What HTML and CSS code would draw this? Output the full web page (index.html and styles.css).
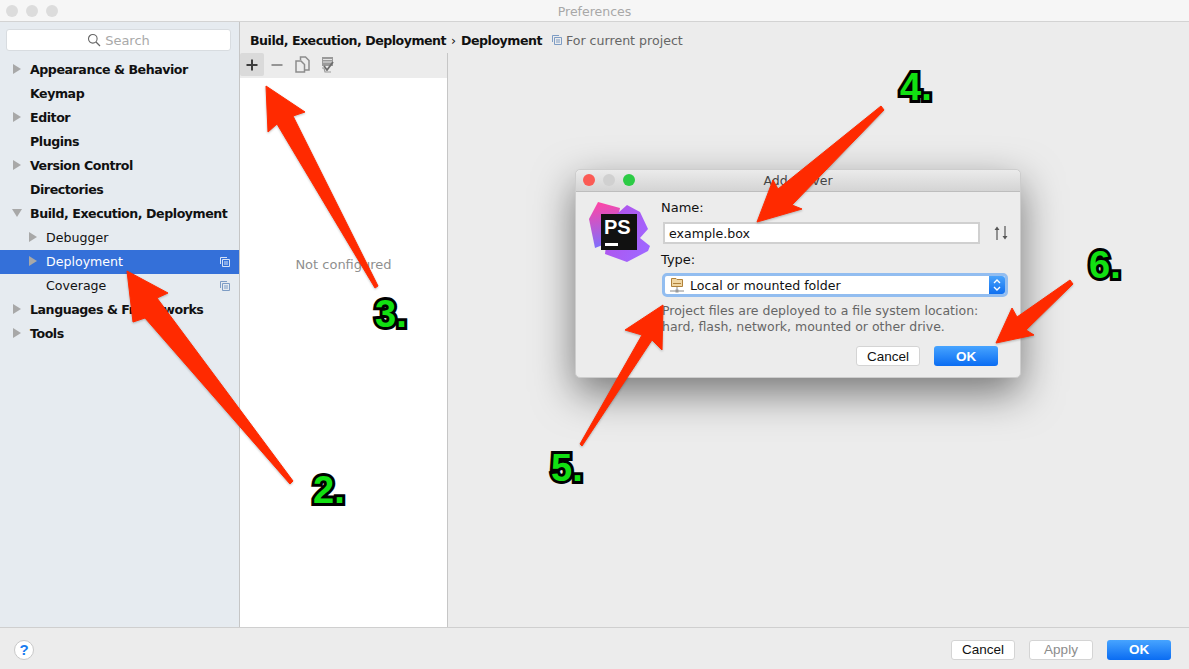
FILE: index.html
```html
<!DOCTYPE html>
<html>

<head>
    <meta charset="utf-8">
    <title>Preferences</title>
    <link rel="stylesheet" href="styles.css">
</head>

<body>
    <div id="window">
        <div class="titlebar">
            <div class="lights">
                <span class="light"></span>
                <span class="light"></span>
                <span class="light"></span>
            </div>
            <span class="title">Preferences</span>
        </div>

        <div class="content">
            <div class="sidebar">
                <div class="search">
                    <svg width="14" height="14" viewBox="0 0 14 14">
                        <circle cx="5.8" cy="5.8" r="4.3" fill="none" stroke="#666" stroke-width="1.1"/>
                        <path d="M9 9l4 4" stroke="#666" stroke-width="1.2"/>
                    </svg>
                    <span>Search</span>
                </div>
                <div class="row top"><span class="tri"></span>Appearance &amp; Behavior</div>
                <div class="row top"><span class="tri none"></span>Keymap</div>
                <div class="row top"><span class="tri"></span>Editor</div>
                <div class="row top"><span class="tri none"></span>Plugins</div>
                <div class="row top"><span class="tri"></span>Version Control</div>
                <div class="row top"><span class="tri none"></span>Directories</div>
                <div class="row top"><span class="tri open"></span>Build, Execution, Deployment</div>
                <div class="row child"><span class="tri"></span>Debugger</div>
                <div class="row child selected"><span class="tri"></span>Deployment
                    <svg class="proj" width="10" height="10" viewBox="0 0 10 10">
                        <path d="M.5 7V.5H7M2.5 2.5h7v7h-7zM4 5h4M4 7h4" fill="none" stroke="#d5e2f7"/>
                    </svg>
                </div>
                <div class="row child"><span class="tri none"></span>Coverage
                    <svg class="proj" width="10" height="10" viewBox="0 0 10 10">
                        <path d="M.5 7V.5H7M2.5 2.5h7v7h-7zM4 5h4M4 7h4" fill="none" stroke="#7d9cc4"/>
                    </svg>
                </div>
                <div class="row top"><span class="tri"></span>Languages &amp; Frameworks</div>
                <div class="row top"><span class="tri"></span>Tools</div>
            </div>

            <div class="main">
                <div class="crumbs">
                    <b>Build, Execution, Deployment</b>
                    <span class="sep">›</span>
                    <b>Deployment</b>
                    <svg class="crumb-icon" width="10" height="10" viewBox="0 0 10 10">
                        <path d="M.5 7V.5H7M2.5 2.5h7v7h-7zM4 5h4M4 7h4" fill="none" stroke="#7d9cc4"/>
                    </svg>
                    <span class="scope">For current project</span>
                </div>
                <div class="panes">
                    <div class="servers">
                        <div class="toolbar">
                            <span class="tool active">
                                <svg width="12" height="12" viewBox="0 0 12 12"><path d="M6 .5v11M.5 6h11" stroke="#3c3c3c" stroke-width="2"/></svg>
                            </span>
                            <span class="tool">
                                <svg width="12" height="12" viewBox="0 0 12 12"><path d="M.5 6h11" stroke="#8c8c8c" stroke-width="1.800"/></svg>
                            </span>
                            <span class="tool">
                                <svg width="15" height="17" viewBox="0 0 15 17">
                                    <path d="M5.500 4V1h5l3.500 3.500V14h-4" fill="none" stroke="#8c8c8c" stroke-width="1.500"/>
                                    <path d="M1 5h5l3.500 3.500V16H1z" fill="#ececec" stroke="#8c8c8c" stroke-width="1.500"/>
                                </svg>
                            </span>
                            <span class="tool">
                                <svg width="13" height="17" viewBox="0 0 13 17">
                                    <path d="M1 1h11v9H1z" fill="#9a9a9a"/>
                                    <path d="M2 3.500h9M2 6h9" stroke="#e4e4e4"/>
                                    <path d="M3 10l3 4 6-8" fill="none" stroke="#6e6e6e" stroke-width="1.800"/>
                                    <path d="M1 12h2l1 4h6" fill="none" stroke="#9a9a9a" stroke-width="1.200"/>
                                </svg>
                            </span>
                        </div>
                        <div class="server-list">Not configured</div>
                    </div>
                    <div class="detail"></div>
                </div>
            </div>
        </div>

        <div class="footer">
            <span class="help">?</span>
            <div class="footer-buttons">
                <span class="btn">Cancel</span>
                <span class="btn disabled">Apply</span>
                <span class="btn primary">OK</span>
            </div>
        </div>
    </div>

    <div id="dialog">
        <div class="dialog-title">
            <div class="dialog-lights">
                <span class="dot red"></span>
                <span class="dot grey"></span>
                <span class="dot green"></span>
            </div>
            <span>Add Server</span>
        </div>
        <div class="dialog-body">
            <svg class="logo" width="62" height="62" viewBox="0 0 62 62">
                <defs>
                    <linearGradient id="ps-left" x1="0.4" y1="0" x2="0.5" y2="1">
                        <stop offset="0" stop-color="#ff45a5"/>
                        <stop offset="1" stop-color="#7c70ff"/>
                    </linearGradient>
                    <linearGradient id="ps-right" x1="0" y1="0" x2="1" y2="0.6">
                        <stop offset="0" stop-color="#b64fe6"/>
                        <stop offset="1" stop-color="#a066ff"/>
                    </linearGradient>
                </defs>
                <polygon points="9,1 31,7 24,40 6,47 0,18" fill="url(#ps-left)"/>
                <polygon points="38,4 51,11 59,28 51,37 61,45 59,50 38,61 16,53 20,20" fill="url(#ps-right)"/>
                <rect x="12" y="13" width="36" height="36" fill="#111"/>
                <rect x="16" y="42" width="13" height="3" fill="#fff"/>
                <text x="15" y="33" class="ps">PS</text>
            </svg>
            <div class="form">
                <label class="label-name">Name:</label>
                <div class="name-row">
                    <span class="input">example.box</span>
                    <svg width="14" height="14" viewBox="0 0 14 14">
                        <path d="M3 14V3M11 0v11" stroke="#555" stroke-width="1.200"/>
                        <path d="M0.500 4L3 0.500 5.500 4zM8.500 10L11 13.500 13.500 10z" fill="#555"/>
                    </svg>
                </div>
                <label class="label-type">Type:</label>
                <div class="select">
                    <svg width="14" height="16" viewBox="0 0 14 16">
                        <path d="M1.500 1.500h4.500l1 1h5.500v7h-11z" fill="#f0d6a2" stroke="#b0813a"/>
                        <path d="M3 6.500h8" stroke="#b0813a"/>
                        <path d="M7 10v3M0 14h14" stroke="#8a8a8a"/>
                        <rect x="5.500" y="12.500" width="3" height="3" fill="#999"/>
                    </svg>
                    <span class="select-text">Local or mounted folder</span>
                    <span class="stepper">
                        <svg width="10" height="16" viewBox="0 0 10 16">
                            <path d="M2 6l3-3 3 3M2 10l3 3 3-3" fill="none" stroke="#fff" stroke-width="1.400"/>
                        </svg>
                    </span>
                </div>
                <p class="hint">Project files are deployed to a file system location:<br>hard, flash, network, mounted or other drive.</p>
                <div class="dialog-buttons">
                    <span class="btn">Cancel</span>
                    <span class="btn primary">OK</span>
                </div>
            </div>
        </div>
    </div>

    <svg id="arrows" width="1189" height="669" viewBox="0 0 1189 669">
        <polygon points="127,271 168,293 157,298 293,481 290,484 145,318 133,322"/>
        <polygon points="266,86 305,112 293,116 378,286 375,288 277,124 268,132"/>
        <polygon points="757,222 773,180 778,189 881,106 884,110 792,205 802,209"/>
        <polygon points="663,305 662,350 652,340 582,446 580,444 642,335 625,330"/>
        <polygon points="996,343 1012,308 1017,317 1070,280 1073,284 1026,330 1034,335"/>
    </svg>

    <span class="step step2">2.</span>
    <span class="step step3">3.</span>
    <span class="step step4">4.</span>
    <span class="step step5">5.</span>
    <span class="step step6">6.</span>
</body>

</html>
```

FILE: styles.css
```css
html,
body {
    margin: 0;
    padding: 0;
    height: 669px;
    overflow: hidden;
    font-family: "DejaVu Sans", sans-serif;
    color: #111;
}

#window {
    width: 1189px;
    height: 669px;
    display: flex;
    flex-flow: column;
    background-color: #ececec;
}

/* title bar */
.titlebar {
    height: 20px;
    padding-top: 1px;
    flex: none;
    display: flex;
    align-items: center;
    justify-content: center;
    background-color: #f6f6f6;
    border-bottom: 1px solid #d3d3d3;
    position: relative;
}

.lights {
    position: absolute;
    left: 6px;
    top: 5px;
    display: flex;
    gap: 8px;
}

.light {
    width: 12px;
    height: 12px;
    border-radius: 50%;
    background-color: #dcdcdc;
}

.title {
    font-size: 12.5px;
    color: #a8a8a8;
}

.content {
    flex: 1;
    display: flex;
    min-height: 0;
}

/* left tree */
.sidebar {
    width: 239px;
    flex: none;
    background-color: #e6ebf0;
    border-right: 1px solid #c6c6c6;
}

.search {
    height: 20px;
    margin: 7px 8px 7px 6px;
    background-color: #fff;
    border: 1px solid #d8dce0;
    border-radius: 3px;
    display: flex;
    align-items: center;
    justify-content: center;
    gap: 4px;
    font-size: 13px;
    color: #a9a9a9;
}

.row {
    height: 24px;
    box-sizing: border-box;
    padding-bottom: 2px;
    display: flex;
    align-items: center;
    font-size: 12.6px;
    white-space: nowrap;
    position: relative;
}

.row.top {
    font-weight: bold;
    letter-spacing: -0.45px;
}

.row.child {
    padding-left: 16px;
}

.row.selected {
    background-color: #3470d9;
    color: #fff;
}

.tri {
    width: 30px;
    flex: none;
    height: 0;
    position: relative;
}

.tri::before {
    content: "";
    position: absolute;
    left: 13px;
    top: -5px;
    border-left: 8px solid #a8a8a8;
    border-top: 5px solid transparent;
    border-bottom: 5px solid transparent;
}

.tri.open::before {
    left: 12px;
    top: -4px;
    border-top: 8px solid #a8a8a8;
    border-left: 5px solid transparent;
    border-right: 5px solid transparent;
    border-bottom: 0;
}

.tri.none::before {
    display: none;
}

.proj {
    position: absolute;
    right: 9px;
    top: 7px;
}

/* right side */
.main {
    flex: 1;
    display: flex;
    flex-flow: column;
    min-width: 0;
}

.crumbs {
    height: 31px;
    flex: none;
    display: flex;
    align-items: center;
    padding-left: 10px;
    padding-top: 5px;
    box-sizing: border-box;
    font-size: 12.6px;
    white-space: nowrap;
}

.crumbs b {
    letter-spacing: -0.5px;
}

.sep {
    margin: 0 5px;
}

.crumb-icon {
    margin-left: 10px;
}

.scope {
    margin-left: 4px;
    color: #666;
}

.panes {
    flex: 1;
    display: flex;
    min-height: 0;
}

.servers {
    width: 207px;
    flex: none;
    display: flex;
    flex-flow: column;
    border-right: 1px solid #c6c6c6;
}

.toolbar {
    height: 25px;
    box-sizing: border-box;
    padding: 0 0 2px 0;
    flex: none;
    display: flex;
    align-items: center;
    gap: 1px;
}

.tool {
    width: 24px;
    height: 23px;
    display: flex;
    align-items: center;
    justify-content: center;
    border-radius: 2px;
}

.tool.active {
    background-color: #dadada;
}

.server-list {
    flex: 1;
    background-color: #fff;
    display: flex;
    justify-content: center;
    padding-top: 179px;
    box-sizing: border-box;
    font-size: 13px;
    color: #8f8f8f;
}

.detail {
    flex: 1;
}

/* bottom bar */
.footer {
    height: 41px;
    box-sizing: content-box;
    flex: none;
    display: flex;
    align-items: center;
    justify-content: space-between;
    padding: 1px 18px 0 14px;
    margin-bottom: -1px;
    border-top: 1px solid #cfcfcf;
}

.help {
    width: 18px;
    height: 18px;
    border-radius: 50%;
    background-color: #fff;
    border: 1px solid #c8c8c8;
    display: flex;
    align-items: center;
    justify-content: center;
    font-family: "Liberation Sans", sans-serif;
    font-size: 15px;
    font-weight: bold;
    color: #1a7cf0;
}

.footer-buttons {
    display: flex;
    gap: 14px;
}

.btn {
    width: 64px;
    height: 20px;
    box-sizing: border-box;
    display: flex;
    align-items: center;
    justify-content: center;
    background-color: #fff;
    border: 1px solid #d4d4d4;
    border-radius: 3px;
    font-family: "Liberation Sans", sans-serif;
    font-size: 13.5px;
    color: #111;
}

.btn.disabled {
    color: #8c8c8c;
}

.btn.primary {
    border: 0;
    background: linear-gradient(#47a4ff, #0a6cf2);
    color: #fff;
    font-weight: bold;
}

/* add server dialog */
#dialog {
    position: absolute;
    left: 575px;
    top: 169px;
    width: 446px;
    height: 209px;
    box-sizing: border-box;
    background-color: #ececec;
    border: 1px solid #cdcdcd;
    border-radius: 5px;
    box-shadow: 0 15px 40px rgba(0, 0, 0, 0.5);
}

.dialog-title {
    height: 21px;
    display: flex;
    align-items: center;
    justify-content: center;
    background: linear-gradient(#ebebeb, #d4d4d4);
    border-bottom: 1px solid #bdbdbd;
    border-radius: 5px 5px 0 0;
    font-size: 12.5px;
    color: #444;
    position: relative;
}

.dialog-lights {
    position: absolute;
    left: 7px;
    top: 4px;
    display: flex;
    gap: 8px;
}

.dot {
    width: 12px;
    height: 12px;
    border-radius: 50%;
}

.dot.red {
    background-color: #fb5b55;
}

.dot.grey {
    background-color: #d0d0d0;
}

.dot.green {
    background-color: #2ccb45;
}

.dialog-body {
    display: flex;
    padding: 9px 0 0 13px;
}

.logo {
    flex: none;
}

.form {
    margin-left: 10px;
    width: 347px;
}

.form label {
    display: block;
    font-size: 13px;
    height: 16px;
    line-height: 16px;
}

.label-name {
    margin-top: -1px;
}

.name-row {
    display: flex;
    align-items: center;
    gap: 14px;
    margin: 6px 0 8px 2px;
}

.input {
    width: 317px;
    height: 22px;
    box-sizing: border-box;
    background-color: #fff;
    border: 2px solid #d0d0d0;
    padding-left: 4px;
    display: flex;
    align-items: center;
    font-size: 12.6px;
}

.select {
    margin: 5px 0 0 1px;
    width: 346px;
    height: 24px;
    box-sizing: border-box;
    background-color: #fff;
    border: 3px solid #92bdf0;
    border-radius: 5px;
    display: flex;
    align-items: center;
    padding-left: 5px;
    font-size: 12.6px;
}

.select-text {
    margin-left: 6px;
    flex: 1;
}

.stepper {
    width: 16px;
    height: 18px;
    display: flex;
    align-items: center;
    justify-content: center;
    background: linear-gradient(#4aa3fb, #0f6ff0);
    border-radius: 0 3px 3px 0;
}

.hint {
    margin: 6px 0 0 1px;
    font-size: 12.5px;
    line-height: 16px;
    color: #666;
}

.dialog-buttons {
    display: flex;
    gap: 14px;
    margin: 11px 0 0 195px;
}

.ps {
    font-family: "Liberation Sans", sans-serif;
    font-size: 20px;
    font-weight: bold;
    fill: #fff;
}

/* annotations drawn on top of the screenshot */
#arrows {
    position: absolute;
    left: 0;
    top: 0;
    fill: #ff2a00;
    stroke: #ff2a00;
    stroke-width: 1;
    stroke-linejoin: round;
    filter: drop-shadow(0 1px 1px rgba(0, 0, 0, 0.25));
}

.step {
    position: absolute;
    font-family: "Liberation Sans", sans-serif;
    font-size: 38px;
    font-weight: bold;
    line-height: 38px;
    color: #12e012;
    -webkit-text-stroke: 6px #000;
    paint-order: stroke fill;
}

.step2 {
    left: 313px;
    top: 471px;
}

.step3 {
    left: 375px;
    top: 295px;
}

.step4 {
    left: 900px;
    top: 68px;
}

.step5 {
    left: 551px;
    top: 449px;
}

.step6 {
    left: 1089px;
    top: 246px;
}
```
